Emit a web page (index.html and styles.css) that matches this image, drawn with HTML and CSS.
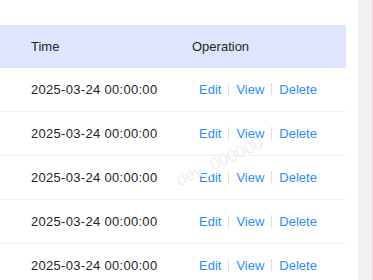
FILE: index.html
```html
<!DOCTYPE html>
<html lang="en">
<head>
<meta charset="UTF-8">
<meta name="viewport" content="width=device-width, initial-scale=1.0">
<title>Records</title>
<link rel="stylesheet" href="styles.css">
</head>
<body>

<div class="page">
  <div class="content">
    <div class="table">
      <div class="row head">
        <div class="cell time">Time</div>
        <div class="cell op">Operation</div>
      </div>
      <div class="row">
        <div class="cell time">2025-03-24 00:00:00</div>
        <div class="cell op links"><a href="#">Edit</a><span class="sep"></span><a href="#">View</a><span class="sep"></span><a href="#">Delete</a></div>
      </div>
      <div class="row">
        <div class="cell time">2025-03-24 00:00:00</div>
        <div class="cell op links"><a href="#">Edit</a><span class="sep"></span><a href="#">View</a><span class="sep"></span><a href="#">Delete</a></div>
      </div>
      <div class="row">
        <div class="cell time">2025-03-24 00:00:00</div>
        <div class="cell op links"><a href="#">Edit</a><span class="sep"></span><a href="#">View</a><span class="sep"></span><a href="#">Delete</a></div>
      </div>
      <div class="row">
        <div class="cell time">2025-03-24 00:00:00</div>
        <div class="cell op links"><a href="#">Edit</a><span class="sep"></span><a href="#">View</a><span class="sep"></span><a href="#">Delete</a></div>
      </div>
      <div class="row">
        <div class="cell time">2025-03-24 00:00:00</div>
        <div class="cell op links"><a href="#">Edit</a><span class="sep"></span><a href="#">View</a><span class="sep"></span><a href="#">Delete</a></div>
      </div>
    </div>
    <!-- watermark -->
    <div class="watermark">dev_000000</div>
  </div>
  <div class="side"></div>
</div>

</body>
</html>
```

FILE: styles.css
```css
body {
  font-family: "Liberation Sans", Arial, sans-serif;
  margin: 0;
  padding: 0;
  background-color: #fff;
  overflow: hidden;
}
.page {
  display: flex;
  height: 280px;
}
.content {
  position: relative;
  width: 346px;
  padding-top: 25px;
  margin-right: 12px;
}
.table {
  width: 346px;
}
.row {
  display: flex;
  align-items: center;
  height: 43px;
  border-bottom: 1px solid #f0f0f0;
  font-size: 13px;
  color: #262626;
}
.row.head {
  background-color: #dde6fd;
  border-bottom: none;
}
.cell.time {
  width: 161px;
  padding-left: 31px;
  letter-spacing: 0.3px;
}
.row.head .cell.time {
  letter-spacing: 0;
}
.cell.op {
  flex: 1;
}
.links {
  display: flex;
  align-items: center;
  padding-left: 7px;
}
.links a {
  color: #2f8cf3;
  text-decoration: none;
}
.sep {
  display: inline-block;
  width: 1px;
  height: 13px;
  background-color: #e0e0e0;
  margin: 0 7px;
}
.watermark {
  position: absolute;
  left: 173px;
  top: 152px;
  font-size: 17px;
  color: #efefef;
  transform: rotate(-25deg);
  pointer-events: none;
}
.side {
  width: 14px;
  background-color: #f0f0f5;
  border-right: 1px solid #f8d5dc;
}
```
